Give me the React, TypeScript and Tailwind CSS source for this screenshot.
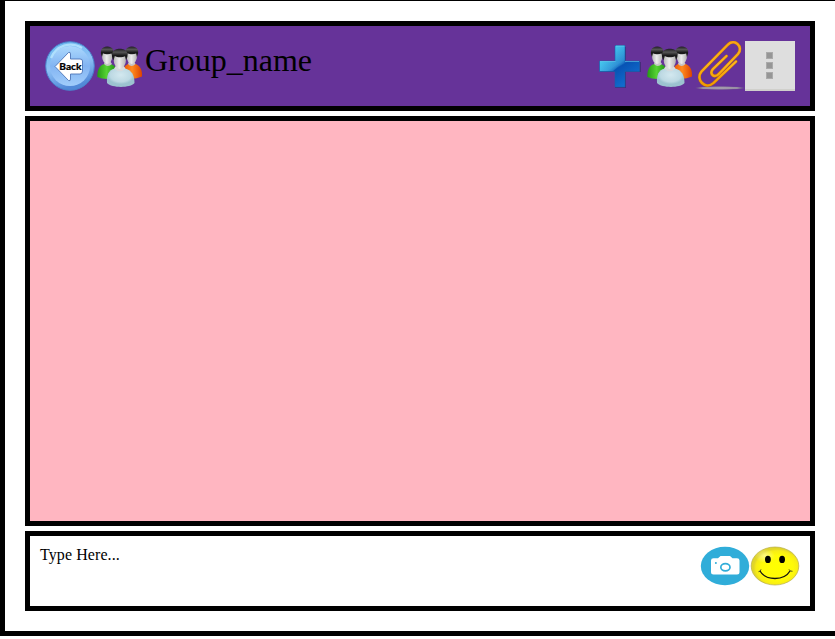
function BackIcon() {
  return (
    <svg viewBox="0 0 50 50" className="size-[50px] shrink-0">
      <defs>
        <linearGradient id="backRim" x1="0" y1="0" x2="0.3" y2="1">
          <stop offset="0" stopColor="#65b5ef" />
          <stop offset="0.55" stopColor="#8fc2f6" />
          <stop offset="1" stopColor="#5289d8" />
        </linearGradient>
        <linearGradient id="backFace" x1="0" y1="0" x2="0" y2="1">
          <stop offset="0" stopColor="#acd9fd" />
          <stop offset="0.5" stopColor="#82b4f2" />
          <stop offset="1" stopColor="#a2cdfb" />
        </linearGradient>
      </defs>
      <circle cx="25" cy="25" r="24.3" fill="url(#backRim)" stroke="#4a83cb" strokeWidth="1" />
      <circle cx="25" cy="25" r="20" fill="url(#backFace)" />
      <path d="M6 17A21 21 0 0 1 37 7" fill="none" stroke="#bde8ff" strokeWidth="2.2" opacity=".8" />
      <path d="M10 25.5L23.5 11.5Q25.5 10.5 25.5 13V18H35Q37.5 18 37.5 20V30Q37.5 33 35 33H25.5V38Q25.5 40.5 23.5 39.5Z" fill="#fff" stroke="#4d75b7" strokeWidth=".9" />
      <text x="14.3" y="28.8" fontFamily="Lato, sans-serif" fontWeight="900" fontSize="9.8" textLength="22.2" lengthAdjust="spacingAndGlyphs" stroke="#000" strokeWidth=".2">Back</text>
    </svg>
  );
}

function PeopleIcon() {
  return (
    <svg viewBox="0 0 50 50" className="size-[50px] shrink-0">
      <defs>
        <linearGradient id="greenCoat"><stop stopColor="#259915" /><stop offset=".45" stopColor="#56d333" /><stop offset="1" stopColor="#168309" /></linearGradient>
        <linearGradient id="orangeCoat"><stop stopColor="#e54b00" /><stop offset=".5" stopColor="#ff8b20" /><stop offset="1" stopColor="#dd4300" /></linearGradient>
        <radialGradient id="blueCoat" cy=".35"><stop stopColor="#d3e8ef" /><stop offset=".75" stopColor="#bdd9e3" /><stop offset="1" stopColor="#9cc3d0" /></radialGradient>
        <linearGradient id="skin"><stop stopColor="#b5b5b5" /><stop offset=".45" stopColor="#ededed" /><stop offset="1" stopColor="#b2b2b2" /></linearGradient>
        <linearGradient id="hair" x1="0" y1="0" x2="0" y2="1"><stop stopColor="#1c1a20" /><stop offset=".3" stopColor="#555" /><stop offset=".6" stopColor="#151515" /><stop offset="1" stopColor="#333" /></linearGradient>
      </defs>
      <path d="M2.3 36C2 28 5 24 9.5 23H16Q23 25 23 37Q9 39.5 2.3 36Z" fill="url(#greenCoat)" />
      <path d="M27 37Q27 25 33 23H40C45 24 47.5 29 47 35.5Q39 39.5 27 37Z" fill="url(#orangeCoat)" />
      <path d="M9 23Q12.5 27 17 23L15 20H10ZM33 23Q36.5 27 40.5 23L39 20H34Z" fill="#c7c7c7" />
      <ellipse cx="12.2" cy="14.8" rx="5.2" ry="8.2" fill="url(#skin)" />
      <ellipse cx="36.8" cy="14.8" rx="5.2" ry="8.2" fill="url(#skin)" />
      <path d="M7 16C5.8 14 5.5 11 6.2 9C7.5 4.2 17 4.2 18.3 9C18.9 11.2 18.5 14 17.3 16L16.5 12.5C14 13.6 10 13.4 8 12.2Z" fill="url(#hair)" />
      <path d="M31.6 16C30.4 14 30.1 11 30.8 9C32.1 4.2 41.6 4.2 42.9 9C43.5 11.2 43.1 14 41.9 16L41.1 12.5C38.6 13.6 34.6 13.4 32.6 12.2Z" fill="url(#hair)" />
      <path d="M12 42C11.5 34 13.5 29 19.5 27.5H30C36.5 29 39.5 34 39.5 42C35 47.2 17 47.2 12 42Z" fill="url(#blueCoat)" />
      <path d="M19 27.5Q24.8 33 30.5 27.5L28 24H21.5Z" fill="#d7dadd" />
      <ellipse cx="24.8" cy="18.4" rx="6.2" ry="9.5" fill="url(#skin)" />
      <path d="M18.5 19.5C16.8 17 16.5 13.5 17.5 11.5C19 6.4 30.7 6.4 32.2 11.5C33 14 32.4 17 31 19.5L30 15.2C27 16.7 22 16.5 19.8 15Z" fill="url(#hair)" />
    </svg>
  );
}

function PlusIcon() {
  return (
    <svg viewBox="0 0 50 50" className="size-[50px] shrink-0">
      <defs>
        <linearGradient id="plusFill" gradientUnits="userSpaceOnUse" x1="10" y1="5" x2="36" y2="46"><stop stopColor="#3ecfef" /><stop offset=".45" stopColor="#2583ce" /><stop offset=".53" stopColor="#0753b4" /><stop offset="1" stopColor="#1473d5" /></linearGradient>
        <linearGradient id="plusShine" gradientUnits="userSpaceOnUse" x1="5" y1="20" x2="32" y2="27"><stop stopColor="#5be4ff" stopOpacity=".5" /><stop offset="1" stopColor="#53b7ea" stopOpacity=".05" /></linearGradient>
      </defs>
      <path d="M20 6H31V21H46V31H31V47H20V31H5V21H20Z" fill="#29275d" opacity=".55" />
      <path d="M20 5Q20 4.5 21 4.5H30V20H44.5V30.5H30V46H20V30.5H4.5V20H20Z" fill="url(#plusFill)" stroke="#1763af" strokeWidth=".6" />
      <path d="M20.5 5H29.5V22Q23 25 18 30H5V20.5H20.5Z" fill="url(#plusShine)" />
      <path d="M21 5H29.5M5 20.5H20.5M30 20.5H44" fill="none" stroke="#7be6f7" strokeWidth=".8" opacity=".6" />
    </svg>
  );
}

const CLIP_WIRE = "M31.5 15L18 28C14 32.5 19 38 23.8 33L43 13C49 6 39.5-3.5 32.5 4L6.5 30.5C0 38 10 49.5 18.5 42L41 20.5";

function ClipIcon() {
  return (
    <svg viewBox="0 0 50 50" className="size-[50px] shrink-0">
      <defs>
        <radialGradient id="clipShadow"><stop stopColor="#aaa2b0" /><stop offset=".75" stopColor="#978da3" /><stop offset="1" stopColor="#76658b" stopOpacity=".35" /></radialGradient>
        <linearGradient id="clipGold" x1="0" y1="0" x2="0" y2="1"><stop stopColor="#f7a514" /><stop offset=".5" stopColor="#fcb51c" /><stop offset="1" stopColor="#f09a00" /></linearGradient>
      </defs>
      <ellipse cx="25" cy="47" rx="24.5" ry="1.8" fill="url(#clipShadow)" />
      <g fill="none" strokeLinecap="round" strokeLinejoin="round">
        <path d={CLIP_WIRE} stroke="#bc6b08" strokeWidth="3" />
        <path d={CLIP_WIRE} stroke="url(#clipGold)" strokeWidth="2.3" />
      </g>
    </svg>
  );
}

function MenuIcon() {
  return (
    <div className="flex size-[50px] shrink-0 flex-col items-center gap-[3px] border-b-2 border-[#d0d0cc] bg-[#dedede] pt-[11px] pr-[1px]">
      <span className="h-[7px] w-[7px] border border-[#aaa] bg-[#969696]" />
      <span className="h-[7px] w-[7px] border border-[#aaa] bg-[#969696]" />
      <span className="h-[7px] w-[7px] border border-[#aaa] bg-[#969696]" />
    </div>
  );
}

function CameraIcon() {
  return (
    <svg viewBox="0 0 50 40" className="h-10 w-[50px]">
      <ellipse cx="25" cy="20" rx="24.2" ry="19.2" fill="#30add9" />
      <path d="M13.5 12.2H18L20.5 10H30L32.5 12.2H37Q39.5 12.2 39.5 14.5V26Q39.5 28.5 37 28.5H13.5Q11 28.5 11 26V14.5Q11 12.2 13.5 12.2Z" fill="#fff" />
      <ellipse cx="25.4" cy="21.3" rx="4.6" ry="3.6" fill="#fff" stroke="#30add9" strokeWidth="1.7" />
      <circle cx="15.9" cy="16.9" r="1" fill="#30add9" />
    </svg>
  );
}

function SmileyIcon() {
  return (
    <svg viewBox="0 0 50 40" className="h-10 w-[50px]">
      <defs>
        <radialGradient id="smileFace" cx=".55" cy=".55"><stop stopColor="#ffff00" /><stop offset=".65" stopColor="#fffb08" /><stop offset=".9" stopColor="#f7ec16" /><stop offset="1" stopColor="#e0d52a" /></radialGradient>
        <radialGradient id="smileGlow"><stop stopColor="#fff" stopOpacity=".5" /><stop offset="1" stopColor="#fff" stopOpacity="0" /></radialGradient>
      </defs>
      <ellipse cx="25" cy="20" rx="23.8" ry="19" fill="url(#smileFace)" stroke="#b8ae4a" strokeWidth=".7" />
      <ellipse cx="15" cy="10" rx="10" ry="7" fill="url(#smileGlow)" />
      <ellipse cx="17.9" cy="13.4" rx="2.9" ry="3.7" />
      <ellipse cx="32.1" cy="13.4" rx="2.9" ry="3.7" />
      <path d="M10 25C16 35 34 35 40 25" fill="none" stroke="#111" strokeWidth="1.3" />
      <path d="M8.5 25.7Q10.5 25.5 11 23.4M39 23.4Q39.5 25.5 42.5 25.3" fill="none" stroke="#222" strokeWidth=".8" />
    </svg>
  );
}

export default function App() {
  return (
    <div className="h-[639px] w-[835px] bg-white font-['Liberation_Serif',serif] text-black">
      <main className="flex h-[636px] flex-col gap-[5px] border-t border-b-5 border-l-5 border-black px-5 py-5">
        <header className="flex h-[90px] w-[790px] shrink-0 items-start border-5 border-black bg-[#663399] p-[15px]">
          <BackIcon />
          <PeopleIcon />
          <h1 className="flex-1 text-[32px] leading-[39px]">Group_name</h1>
          <PlusIcon />
          <PeopleIcon />
          <ClipIcon />
          <MenuIcon />
        </header>
        <section className="h-[410px] w-[790px] shrink-0 border-5 border-black bg-[#ffb6c1]" />
        <footer className="flex h-[80px] w-[790px] shrink-0 items-start justify-between border-5 border-black p-[10px]">
          <p className="text-base leading-[18px] tracking-[0.08px]">Type Here...</p>
          <div className="flex">
            <CameraIcon />
            <SmileyIcon />
          </div>
        </footer>
      </main>
    </div>
  );
}
